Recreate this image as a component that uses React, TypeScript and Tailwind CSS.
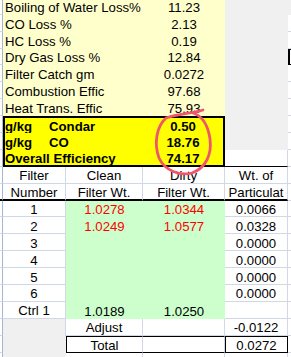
import React from "react";

// spreadsheet geometry: edge strip, Filter, Clean, Dirty, Wt., next column
const ROW = "grid grid-cols-[3px_63px_77px_82px_63px_3px] h-[16.9px]";
const GL = "border-[#d0d7e5]";
const CELL = "flex items-center justify-center pt-[2px] whitespace-nowrap overflow-hidden";

const losses: [string, string][] = [
  ["Boiling of Water Loss%", "11.23"],
  ["CO Loss %", "2.13"],
  ["HC Loss %", "0.19"],
  ["Dry Gas Loss %", "12.84"],
  ["Filter Catch gm", "0.0272"],
  ["Combustion Effic", "97.68"],
  ["Heat Trans. Effic", "75.93"],
];

const results = [
  { unit: "g/kg", label: "Condar", value: "0.50" },
  { unit: "g/kg", label: "CO", value: "18.76" },
  { unit: "Overall Efficiency", label: "", value: "74.17" },
];

const filters = [
  { n: "1", clean: "1.0278", dirty: "1.0344", wt: "0.0066" },
  { n: "2", clean: "1.0249", dirty: "1.0577", wt: "0.0328" },
  { n: "3", clean: "", dirty: "", wt: "0.0000" },
  { n: "4", clean: "", dirty: "", wt: "0.0000" },
  { n: "5", clean: "", dirty: "", wt: "0.0000" },
  { n: "6", clean: "", dirty: "", wt: "0.0000" },
];

function Edge({ className = "" }: { className?: string }) {
  return <div className={`bg-white border-b ${GL} border-r border-r-[#a3b8d6] ${className}`} />;
}

function Blank({ className = "" }: { className?: string }) {
  return <div className={`bg-white border-b border-r ${GL} ${className}`} />;
}

export default function App() {
  return (
    <div className="relative w-[291px] h-[357px] overflow-hidden bg-white text-black font-['Liberation_Sans',Arial,sans-serif] text-[13.2px] leading-none">
      <div className="mt-[-2.1px]">
        {/* loss summary */}
        {losses.map(([label, value], i) => (
          <div key={label} className={ROW}>
            <Edge />
            <div className="col-span-2 bg-[#ffffcc] flex items-center pt-[2px] pl-[2px] whitespace-nowrap">{label}</div>
            <div className={`${CELL} bg-[#ffffcc]`}>{value}</div>
            <div className="bg-[#f0f0f0]" />
            {i === 0 ? (
              <div className="bg-[#f0f0f0]" />
            ) : i === 3 ? (
              <div className="bg-white border-y border-l-2 border-black" />
            ) : (
              <Blank className="border-r-0" />
            )}
          </div>
        ))}

        {/* emission results */}
        {results.map((r, i) => (
          <div key={r.value} className={ROW}>
            <Edge />
            <div
              className={`col-span-3 bg-[#ffff00] border-x-2 border-black flex font-bold ${i === 0 ? "border-t-2" : ""} ${
                i === 2 ? "border-b-2" : ""
              }`}
            >
              <div className="flex-1 flex items-center pt-[2px] whitespace-nowrap">
                <span className={r.label ? "w-[44px]" : ""}>{r.unit}</span>
                {r.label && <span>{r.label}</span>}
              </div>
              <div className={`${CELL} w-[80px]`}>{r.value}</div>
            </div>
            {i < 2 ? <div className="bg-[#f0f0f0]" /> : <Blank className="border-b-black" />}
            <Blank className="border-r-0" />
          </div>
        ))}

        {/* filter table header */}
        {[
          ["Filter", "Clean", "Dirty", "Wt. of"],
          ["Number", "Filter Wt.", "Filter Wt.", "Particulat"],
        ].map((cols, i) => (
          <div key={cols[0]} className={ROW}>
            <Edge className={i === 1 ? "border-b-2 border-b-black" : ""} />
            {cols.map((c) => (
              <div key={c + i} className={`${CELL} bg-white border-r ${GL} ${i === 1 ? "border-b-2 border-b-black" : "border-b"}`}>
                {c}
              </div>
            ))}
            <Blank className="border-r-0" />
          </div>
        ))}

        {/* filter weights */}
        {filters.map((f) => (
          <div key={f.n} className={ROW}>
            <Edge />
            <div className={`${CELL} bg-white border-b border-r ${GL}`}>{f.n}</div>
            <div className={`${CELL} bg-[#ccffcc] text-[#ff0000]`}>{f.clean}</div>
            <div className={`${CELL} bg-[#ccffcc] text-[#ff0000]`}>{f.dirty}</div>
            <div className={`${CELL} bg-white border-b border-r ${GL}`}>{f.wt}</div>
            <Blank className="border-r-0" />
          </div>
        ))}

        <div className={ROW}>
          <Edge />
          <div className={`${CELL} bg-white border-b border-r ${GL}`}>Ctrl 1</div>
          <div className={`${CELL} bg-[#ccffcc]`}>1.0189</div>
          <div className={`${CELL} bg-[#ccffcc]`}>1.0250</div>
          <Blank />
          <Blank className="border-r-0" />
        </div>

        <div className={ROW}>
          <Edge />
          <div className={`bg-[#f0f0f0] border-r ${GL}`} />
          <div className={`${CELL} bg-white border-b border-r ${GL}`}>Adjust</div>
          <Blank />
          <div className={`${CELL} bg-white border-b border-r ${GL}`}>-0.0122</div>
          <Blank className="border-r-0" />
        </div>

        <div className={ROW}>
          <Edge />
          <div className="bg-[#f0f0f0]" />
          <div className={`${CELL} bg-white border-y border-l border-black border-r border-r-[#d0d7e5]`}>Total</div>
          <div className={`bg-white border-y border-black border-r border-r-[#d0d7e5]`} />
          <div className={`${CELL} bg-white border border-black`}>0.0272</div>
          <Blank className="border-r-0" />
        </div>

        <div className={ROW}>
          <Edge />
          <div className="bg-[#f0f0f0]" />
          <Blank />
          <Blank />
          <Blank />
          <Blank className="border-r-0" />
        </div>
      </div>

      {/* hand-drawn highlight around the emission results */}
      <svg className="absolute left-0 top-0 pointer-events-none" width="291" height="357" viewBox="0 0 291 357">
        <path
          d="M 203 110 C 195 113, 178 114, 166 118 C 156 127, 154 144, 159 158 C 165 171, 180 176, 192 173 C 206 168, 212 154, 210 139 C 208 125, 202 116, 193 113"
          fill="none"
          stroke="#f0566a"
          strokeWidth="2.8"
          strokeLinecap="round"
          strokeLinejoin="round"
        />
      </svg>
    </div>
  );
}
